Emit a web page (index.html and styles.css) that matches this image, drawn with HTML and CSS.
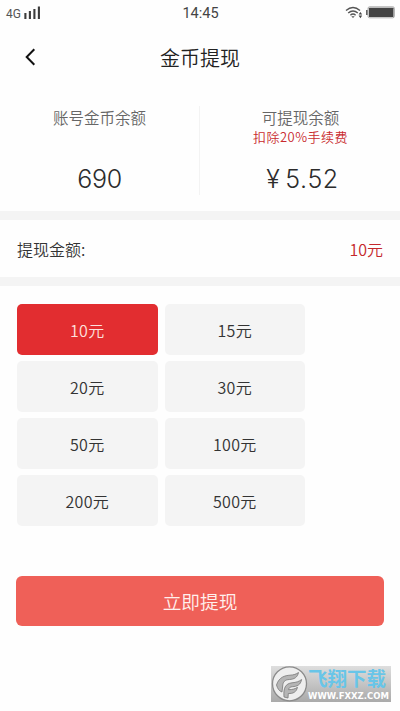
FILE: index.html
```html
<!DOCTYPE html>
<html lang="zh-CN">
<head>
<meta charset="utf-8">
<title>金币提现</title>
<link rel="stylesheet" href="styles.css">
</head>
<body>
<div class="screen">
  <header class="status">
    <div class="status-left">
      <span class="network">4G</span>
      <svg class="signal" width="17" height="13" viewBox="0 0 17 13"><path d="M1.4 7v6M5.900 5v8M10.400 3v10M14.900 0.500V13" stroke="#3c3c3c" stroke-width="2.100"/></svg>
    </div>
    <time class="clock">14:45</time>
    <div class="status-right">
      <svg width="18" height="13" viewBox="0 0 18 13" fill="none" stroke="#555" stroke-width="1.400"><path d="M1 4.600Q8 -1.600 15 4.600M3.200 7.100Q8 2.700 12.800 7.100M5.400 9.200Q8 7 10.600 9.200"/><path d="M6.300 10.300h3.400L8 12z" fill="#555" stroke="none"/><path d="M15.400 6l1.800 2.400h-3.600zM15.400 12.200l1.800-2.600h-3.600z" fill="#444" stroke="none"/></svg>
      <svg width="29" height="13" viewBox="0 0 29 13"><path d="M0 4h1.800v5H0z" fill="#666"/><rect x="2" y=".8" width="26.400" height="11" rx="1.600" fill="#fff" stroke="#999" stroke-width=".8"/><rect x="2.900" y="1.700" width="24.600" height="9.200" rx=".5" fill="#444"/></svg>
    </div>
  </header>
  <nav class="titlebar">
    <svg class="back" width="11" height="18" viewBox="0 0 11 18"><path d="M9.300 1.300 1.700 9l7.600 7.700" fill="none" stroke="#111" stroke-width="2"/></svg>
    <h1>金币提现</h1>
  </nav>
  <section class="balances">
    <div class="balance">
      <div class="label">账号金币余额</div>
      <div class="note"></div>
      <div class="value">690</div>
    </div>
    <div class="balance">
      <div class="label">可提现余额</div>
      <div class="note">扣除20%手续费</div>
      <div class="value price"><span class="yen">¥</span>5.52</div>
    </div>
  </section>
  <section class="amount">
    <span>提现金额:</span>
    <span class="chosen">10元</span>
  </section>
  <section class="options">
    <div class="option selected">10元</div>
    <div class="option">15元</div>
    <div class="option">20元</div>
    <div class="option">30元</div>
    <div class="option">50元</div>
    <div class="option">100元</div>
    <div class="option">200元</div>
    <div class="option">500元</div>
  </section>
  <button class="submit">立即提现</button>
  <div class="watermark">
    <svg width="37" height="36" viewBox="0 0 37 36"><circle cx="18.500" cy="17.800" r="17" fill="#eee" stroke="#8b8b8b" stroke-width="1.300"/><g fill="#b5b5b5" stroke="#777" stroke-width=".8"><path d="M5.500 19C8 11 14 9.500 19 9.200c4-.3 6-1 8.500-2.700-1 5-4.500 6.800-9 7-5 .2-6.500 2.500-6.800 6.500L11 26c-3-1-4.500-3.500-5.500-7z"/><path d="M13 31c-.8-9 1.500-13.500 8-14.200 4.500-.4 7-1.300 9.600-3.300-1 5.500-4.600 7-9.200 7.200-2.400.2-3.500 1.200-3.800 3 4-.1 6.400-.7 8.900-2.400-1.200 5-4.500 6.400-9.200 6.200L17 32z"/></g></svg>
    <div class="brand">
      <div class="brand-name">飞翔下载</div>
      <div class="brand-url">WWW.FXXZ.COM</div>
    </div>
  </div>
</div>
</body>
</html>
```
FILE: styles.css
```css
* { box-sizing: border-box; }
body { margin: 0; background: #fefefe; font-family: "Noto Sans CJK SC", sans-serif; color: #444; }
.screen { position: relative; width: 400px; height: 711px; overflow: hidden; background: #fefefe; }
.status { display: grid; grid-template-columns: 1fr auto 1fr; align-items: center; height: 26px; padding: 0 5px 0 6px; }
.status-left { display: flex; align-items: center; gap: 3px; }
.network { font: 12px/14px Roboto, sans-serif; color: #555; padding-top: 2px; }
.signal { margin-top: -2px; }
.clock { font: 14.500px/16px Roboto, sans-serif; color: #444; padding-top: 1px; }
.status-right { display: flex; justify-content: flex-end; align-items: center; gap: 3px; margin-top: -2px; }
.titlebar { display: grid; grid-template-columns: 50px 1fr 50px; align-items: center; height: 62px; }
.back { margin-left: 25px; }
h1 { margin: 0; padding-top: 1px; font-size: 20px; line-height: 30px; font-weight: 350; text-align: center; color: #222; }
.balances { display: grid; grid-template-columns: 1fr 1fr; height: 123px; padding: 18px 0 19px; }
.balance { text-align: center; }
.balance:first-child { border-right: 1px solid #f3f3f3; }
.balance + .balance { padding-left: 1px; }
.label { height: 22px; font-size: 15.500px; line-height: 22px; font-weight: 350; color: #666; }
.note { height: 18px; font-size: 13px; line-height: 18px; letter-spacing: .5px; font-weight: 350; color: #c92b2e; }
.value { margin-top: 17px; font: 350 25px/32px Inter, sans-serif; color: #2c2c2c; letter-spacing: -.3px; }
.price { padding-left: 4px; letter-spacing: .6px; }
.yen { margin-right: 5px; }
.amount { display: flex; justify-content: space-between; align-items: center; height: 75px; padding: 0 17px; border: solid #f4f4f4; border-width: 9px 0; font-size: 16px; font-weight: 350; color: #333; }
.chosen { color: #c5282c; }
.options { display: grid; grid-template-columns: 140.500px 140.500px; grid-auto-rows: 51px; gap: 6px 7px; padding: 18px 17px 0; }
.option { display: flex; align-items: center; justify-content: center; border-radius: 5px; background: #f4f4f4; font-size: 16px; font-weight: 350; letter-spacing: .3px; color: #333; }
.selected { background: #e22d30; color: #fde0de; }
.submit { display: block; width: 368px; height: 50px; margin: 50px 16px 0; padding: 0; border: 0; border-radius: 6px; background: #ef6058; color: #fff0ed; font: 350 18.700px/50px "Noto Sans CJK SC", sans-serif; }
.watermark { position: absolute; left: 271px; top: 666px; display: flex; width: 120px; height: 36px; background: linear-gradient(#dedede, #aaa); }
.brand { width: 83px; }
.brand-name { height: 24px; font-size: 19.500px; line-height: 23px; font-weight: 700; color: #68c5e8; white-space: nowrap; }
.brand-url { font: bold 8.500px/12px "DejaVu Sans", sans-serif; color: #fff; white-space: nowrap; }
```
